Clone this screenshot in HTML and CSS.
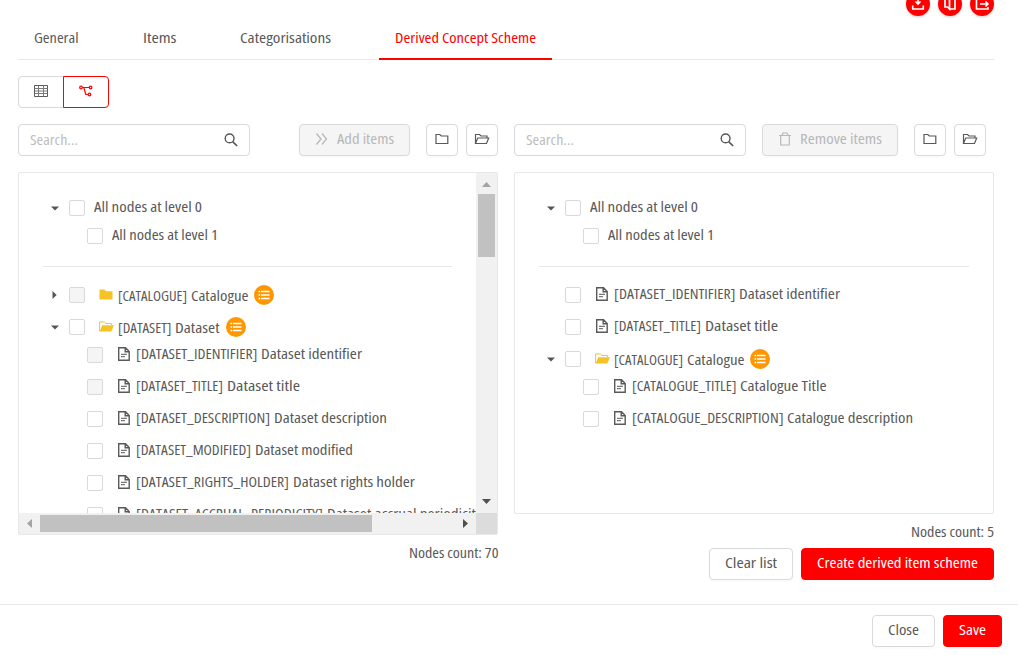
FILE: index.html
```html
<!DOCTYPE html>
<html lang="en">
<head>
<meta charset="utf-8">
<title>Derived Concept Scheme</title>
<link rel="stylesheet" href="styles.css">
</head>
<body>
<svg class="defs" aria-hidden="true">
  <symbol id="folder" viewBox="0 0 14 14"><path d="M1 2.500v9h11.800V4H6.300L4.800 2.500z" fill="none" stroke="currentColor" stroke-width="1.200"/></symbol>
  <symbol id="folder-open" viewBox="0 0 16 14"><path d="M1.500 11.500V2.500h4l1.500 1.500h6V6M1.500 11.500l2.200-5.500H14.700l-2.200 5.500z" fill="none" stroke="currentColor" stroke-width="1.200"/></symbol>
  <symbol id="folder-fill" viewBox="0 0 14 12"><path d="M.5 .5h4.800l1.800 1.800H13.500V10.500H.5z" fill="#f6c326"/></symbol>
  <symbol id="folder-open-fill" viewBox="0 0 15 12"><path d="M.6 10V.9h4.600L7 2.500h5.600v2" fill="none" stroke="#f6c326" stroke-width="1"/><path d="M3.200 4.200H15L12.300 10.500H.6z" fill="#f6c326"/></symbol>
  <symbol id="doc" viewBox="0 0 12 14"><path d="M.7.7H7.500L11.200 4.500V13.200H.7zM7.200.8V4.800H11.200" fill="none" stroke="#595959" stroke-width="1.400"/><path d="M3 7.300H9M3 9.700H7" stroke="#777" stroke-width="1.200"/></symbol>
  <symbol id="list" viewBox="0 0 20 20"><circle cx="10" cy="10" r="10" fill="#ff9800"/><path d="M4.500 6.500h1.700M4.500 10h1.700M4.500 13.500h1.700M7 6.500H15.500M7 10H15.500M7 13.500H15.500" stroke="#fff" stroke-width="1.500"/></symbol>
  <symbol id="search" viewBox="0 0 14 14"><circle cx="5.600" cy="5.400" r="4.400" fill="none" stroke="#555" stroke-width="1.400"/><path d="M8.800 8.800L13.200 13" stroke="#555" stroke-width="1.600"/></symbol>
  <symbol id="down" viewBox="0 0 8 5"><path d="M0 .5h8L4 4.600z" fill="#555"/></symbol>
  <symbol id="right" viewBox="0 0 5 8"><path d="M.5 0v8L4.600 4z" fill="#555"/></symbol>
</svg>

<div class="actions">
  <span class="round"><svg width="24" height="24" viewBox="0 0 24 24"><path d="M12 6v8.500M9.500 12.500l2.500 2.500 2.500-2.500M6.700 16.500v3.500h10.600v-3.500" fill="none" stroke="#fff" stroke-width="1.600"/></svg></span>
  <span class="round"><svg width="24" height="24" viewBox="0 0 24 24"><path d="M9 6h8v14h-5.500M7 6v12h2.500l2 2V9" fill="none" stroke="#fff" stroke-width="1.700"/></svg></span>
  <span class="round"><svg width="24" height="24" viewBox="0 0 24 24"><path d="M18 10V6H6.500v14H18v-2M10 15h8M15.500 12.500l2.500 2.500-2.500 2.500" fill="none" stroke="#fff" stroke-width="1.600"/></svg></span>
</div>

<nav class="tabs">
  <div class="tab"><span class="t" data-w="44.500">General</span></div>
  <div class="tab"><span class="t" data-w="33.500">Items</span></div>
  <div class="tab"><span class="t" data-w="91">Categorisations</span></div>
  <div class="tab active"><span class="t" data-w="141">Derived Concept Scheme</span></div>
</nav>

<div class="toggle">
  <span class="seg"><svg width="14" height="12" viewBox="0 0 14 12"><path d="M.5.5h13v11H.5z" fill="none" stroke="#595959"/><path d="M.5 3.500h13M.5 6h13M.5 8.500h13M4.500.5v11M9.500.5v11" fill="none" stroke="#7a7a7a"/></svg></span>
  <span class="seg on"><svg width="14" height="12" viewBox="0 0 14 12"><path d="M3.200 2.500H10M4.800 2.500l2 7H9" fill="none" stroke="#f00" stroke-width="1.200"/><circle cx="2" cy="2.500" r="1.300" class="dot"/><circle cx="11.600" cy="2.500" r="1.300" class="dot"/><circle cx="10.500" cy="9.500" r="1.300" class="dot"/></svg></span>
</div>

<main class="columns">
  <section class="col">
    <div class="bar">
      <div class="search"><span class="t" data-w="48">Search...</span><svg width="14" height="14"><use href="#search"/></svg></div>
      <div class="btn off add"><svg width="13" height="12" viewBox="0 0 13 12"><path d="M1.500.5l4.500 5.500-4.500 5.500M7 .5l4.500 5.500L7 11.500" fill="none" stroke="#b8b8b8" stroke-width="1.300"/></svg><span class="t" data-w="57">Add items</span></div>
      <div class="btn icon first"><svg width="14" height="14"><use href="#folder"/></svg></div>
      <div class="btn icon"><svg width="16" height="14"><use href="#folder-open"/></svg></div>
    </div>
    <div class="panel scrolled">
      <div class="view">
        <div class="row short"><i class="caret"><svg width="8" height="5"><use href="#down"/></svg></i><b class="cb"></b><span class="t" data-w="108">All nodes at level 0</span></div>
        <div class="row short kid"><b class="cb"></b><span class="t" data-w="106">All nodes at level 1</span></div>
        <hr>
        <div class="row parent"><i class="caret side"><svg width="5" height="8"><use href="#right"/></svg></i><b class="cb dis"></b><i class="ic"><svg width="14" height="12"><use href="#folder-fill"/></svg></i><span class="t" data-w="69">[CATALOGUE]</span><span class="t name" data-w="57.500">Catalogue</span><svg class="badge" width="20" height="20"><use href="#list"/></svg></div>
        <div class="row parent open"><i class="caret"><svg width="8" height="5"><use href="#down"/></svg></i><b class="cb"></b><i class="ic"><svg width="15" height="12"><use href="#folder-open-fill"/></svg></i><span class="t" data-w="53.500">[DATASET]</span><span class="t name" data-w="44.500">Dataset</span><svg class="badge" width="20" height="20"><use href="#list"/></svg></div>
        <div class="row kid"><b class="cb dis"></b><i class="ic"><svg width="12" height="14"><use href="#doc"/></svg></i><span class="t" data-w="121.500">[DATASET_IDENTIFIER]</span><span class="t name" data-w="101">Dataset identifier</span></div>
        <div class="row kid"><b class="cb dis"></b><i class="ic"><svg width="12" height="14"><use href="#doc"/></svg></i><span class="t" data-w="87">[DATASET_TITLE]</span><span class="t name" data-w="73">Dataset title</span></div>
        <div class="row kid"><b class="cb"></b><i class="ic"><svg width="12" height="14"><use href="#doc"/></svg></i><span class="t" data-w="134">[DATASET_DESCRIPTION]</span><span class="t name" data-w="113">Dataset description</span></div>
        <div class="row kid"><b class="cb"></b><i class="ic"><svg width="12" height="14"><use href="#doc"/></svg></i><span class="t" data-w="115">[DATASET_MODIFIED]</span><span class="t name" data-w="98">Dataset modified</span></div>
        <div class="row kid"><b class="cb"></b><i class="ic"><svg width="12" height="14"><use href="#doc"/></svg></i><span class="t" data-w="153">[DATASET_RIGHTS_HOLDER]</span><span class="t name" data-w="122">Dataset rights holder</span></div>
        <div class="row kid"><b class="cb"></b><i class="ic"><svg width="12" height="14"><use href="#doc"/></svg></i><span class="t" data-w="187">[DATASET_ACCRUAL_PERIODICITY]</span><span class="t name" data-w="155">Dataset accrual periodicity</span></div>
      </div>
      <div class="vbar"><svg width="9" height="5" viewBox="0 0 9 5"><path d="M0 5h9L4.500 0z" fill="#a3a3a3"/></svg><div class="vthumb"></div><svg class="end" width="9" height="5" viewBox="0 0 9 5"><path d="M0 0h9L4.500 5z" fill="#505050"/></svg></div>
      <div class="hbar"><svg width="5" height="9" viewBox="0 0 5 9"><path d="M5 0v9L0 4.500z" fill="#a3a3a3"/></svg><div class="hthumb"></div><svg class="end" width="5" height="9" viewBox="0 0 5 9"><path d="M0 0v9l5-4.500z" fill="#505050"/></svg></div>
      <div class="corner"></div>
    </div>
    <div class="count"><span class="t" data-w="89.500">Nodes count: 70</span></div>
  </section>

  <section class="col">
    <div class="bar">
      <div class="search"><span class="t" data-w="48">Search...</span><svg width="14" height="14"><use href="#search"/></svg></div>
      <div class="btn off remove"><svg width="12" height="14" viewBox="0 0 12 14"><path d="M0 3.500h12M3 3.500l1-2.500h4l1 2.500M1.700 4v9h8.600V4" fill="none" stroke="#b8b8b8" stroke-width="1.200"/></svg><span class="t" data-w="82">Remove items</span></div>
      <div class="btn icon first"><svg width="14" height="14"><use href="#folder"/></svg></div>
      <div class="btn icon"><svg width="16" height="14"><use href="#folder-open"/></svg></div>
    </div>
    <div class="panel plain">
      <div class="row short"><i class="caret"><svg width="8" height="5"><use href="#down"/></svg></i><b class="cb"></b><span class="t" data-w="108">All nodes at level 0</span></div>
      <div class="row short kid"><b class="cb"></b><span class="t" data-w="106">All nodes at level 1</span></div>
      <hr>
      <div class="row"><i class="caret"></i><b class="cb"></b><i class="ic"><svg width="12" height="14"><use href="#doc"/></svg></i><span class="t" data-w="121.500">[DATASET_IDENTIFIER]</span><span class="t name" data-w="101">Dataset identifier</span></div>
      <div class="row"><i class="caret"></i><b class="cb"></b><i class="ic"><svg width="12" height="14"><use href="#doc"/></svg></i><span class="t" data-w="87">[DATASET_TITLE]</span><span class="t name" data-w="73">Dataset title</span></div>
      <div class="row parent open"><i class="caret"><svg width="8" height="5"><use href="#down"/></svg></i><b class="cb"></b><i class="ic"><svg width="15" height="12"><use href="#folder-open-fill"/></svg></i><span class="t" data-w="69">[CATALOGUE]</span><span class="t name" data-w="57.500">Catalogue</span><svg class="badge" width="20" height="20"><use href="#list"/></svg></div>
      <div class="row kid"><b class="cb"></b><i class="ic"><svg width="12" height="14"><use href="#doc"/></svg></i><span class="t" data-w="104.500">[CATALOGUE_TITLE]</span><span class="t name" data-w="86.500">Catalogue Title</span></div>
      <div class="row kid"><b class="cb"></b><i class="ic"><svg width="12" height="14"><use href="#doc"/></svg></i><span class="t" data-w="151.500">[CATALOGUE_DESCRIPTION]</span><span class="t name" data-w="126">Catalogue description</span></div>
    </div>
    <div class="count"><span class="t" data-w="83">Nodes count: 5</span></div>
    <div class="buttons">
      <div class="btn"><span class="t" data-w="52">Clear list</span></div>
      <div class="btn primary"><span class="t" data-w="161">Create derived item scheme</span></div>
    </div>
  </section>
</main>

<footer class="footer">
  <div class="btn"><span class="t" data-w="31">Close</span></div>
  <div class="btn primary"><span class="t" data-w="27">Save</span></div>
</footer>
<script src="fit.js"></script>
</body>
</html>
```
FILE: styles.css
```css
* { box-sizing: border-box; }
html, body { height: 100%; overflow: hidden; }
body {
  margin: 0;
  background: #fff;
  color: #595959;
  font: 14px/20px "Open Sans", "Noto Sans", sans-serif;
  font-stretch: 75%;
  display: flex;
  flex-direction: column;
}
svg { display: block; flex: none; }
.defs { width: 0; height: 0; position: absolute; }
.t { display: inline-block; white-space: nowrap; transform-origin: 0 50%; flex: none; }

.actions { height: 16px; display: flex; justify-content: flex-end; align-items: flex-end; gap: 8px; padding-right: 24px; flex: none; }
.round { width: 24px; height: 24px; border-radius: 50%; background: #f00; box-shadow: 0 1px 3px rgba(0,0,0,.2); }
.round svg { margin-top: -3px; }

.tabs { display: flex; gap: 32px; height: 44px; margin: 0 24px 0 18px; border-bottom: 1px solid #e8e8e8; flex: none; }
.tab { height: 44px; padding: 12px 16px 0; }
.tab.active { color: #f00; border-bottom: 2px solid #f00; }

.toggle { display: flex; margin: 16px 0 16px 18px; height: 32px; flex: none; }
.seg { width: 46px; height: 32px; border: 1px solid #d9d9d9; border-radius: 4px 0 0 4px; display: flex; align-items: center; justify-content: center; padding-bottom: 2px; }
.seg.on { margin-left: -1px; border-color: #f00; border-radius: 0 4px 4px 0; }
.dot { fill: #fff; stroke: #f00; stroke-width: 1.2; }

.columns { display: flex; gap: 16px; margin-left: 18px; flex: 1; }
.col { width: 480px; }
.bar { display: flex; height: 32px; margin-bottom: 16px; }
.search { width: 232px; height: 32px; border: 1px solid #d9d9d9; border-radius: 4px; padding: 0 11px; display: flex; align-items: center; justify-content: space-between; color: #bdbdbd; }
.btn { height: 32px; border: 1px solid #d9d9d9; border-radius: 4px; padding: 0 15px 2px; display: flex; align-items: center; justify-content: center; box-shadow: 0 2px 0 rgba(0,0,0,.015); background: #fff; }
.btn.off { background: #f5f5f5; color: #b8b8b8; gap: 9px; }
.btn.add { width: 111px; margin-left: 49px; }
.btn.remove { width: 136px; margin-left: 16px; }
.btn.icon { width: 32px; padding: 0 0 2px; margin-left: 8px; }
.btn.icon.first { margin-left: 16px; }
.btn.primary { background: #f00; border-color: #f00; color: #fff; }

.panel { border: 1px solid #e8e8e8; border-radius: 2px; }
.scrolled { height: 363px; display: grid; grid-template: 340px 21px / 457px 21px; }
.plain { height: 342px; padding: 21px 24px 0; }
.view { overflow: hidden; padding: 21px 24px 0; }
hr { border: 0; border-top: 1px solid #e8e8e8; margin: 16px 0 12px; }

.row { height: 32px; display: flex; align-items: center; white-space: nowrap; }
.row.short { height: 28px; }
.row.open { height: 28px; padding-top: 4px; }
.kid { padding-left: 44px; }
.caret { width: 26px; height: 16px; display: flex; align-items: center; padding-left: 8px; flex: none; }
.caret.side { padding-left: 9px; }
.cb { width: 16px; height: 16px; border: 1px solid #d9d9d9; border-radius: 2px; margin-right: 9px; flex: none; background: #fff; }
.cb.dis { background: #f5f5f5; }
.ic { width: 24px; display: flex; justify-content: center; padding-bottom: 2px; flex: none; }
.row.parent .ic { padding-bottom: 0; }
.row .t { padding-bottom: 2px; }
.row.parent .t { padding-bottom: 0; padding-top: 1px; }
.name { margin-left: 3.5px; }
.badge { margin-left: 6px; }

.vbar { background: #f1f1f1; display: flex; flex-direction: column; align-items: center; padding: 9px 0; }
.vthumb { width: 17px; height: 63px; background: #c1c1c1; margin-top: 7px; }
.hbar { background: #f1f1f1; display: flex; align-items: center; padding: 0 8px; }
.hthumb { width: 332px; height: 17px; background: #c1c1c1; margin-left: 8px; }
.vbar .end { margin-top: auto; }
.hbar .end { margin-left: auto; }
.corner { background: #dcdcdc; }

.count { display: flex; justify-content: flex-end; height: 20px; margin-top: 8px; }
.buttons { display: flex; justify-content: flex-end; gap: 8px; margin-top: 6px; }
.footer { height: 51px; flex: none; border-top: 1px solid #e8e8e8; display: flex; justify-content: flex-end; gap: 8px; padding: 10px 16px 0; }
```
FILE: fit.js
```js
// Condenses each label horizontally to its design width.
document.querySelectorAll('.t').forEach(function (el) {
  var natural = el.getBoundingClientRect().width;
  var target = Number(el.dataset.w);
  el.style.transform = 'scaleX(' + target / natural + ')';
  el.style.marginRight = (target - natural) + 'px';
});
```
